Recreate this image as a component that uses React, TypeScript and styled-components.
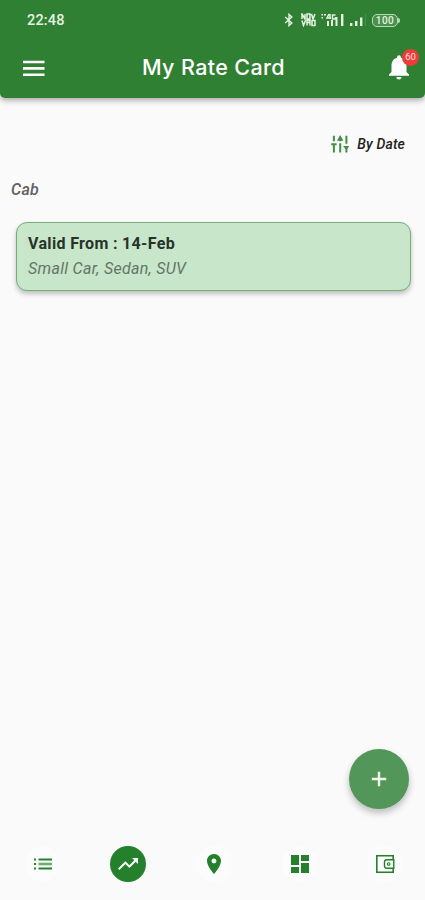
import React from 'react';
import styled, { createGlobalStyle } from 'styled-components';
import {
  MdDashboard,
  MdLocationOn,
  MdNotifications,
  MdTrendingUp,
} from 'react-icons/md';

const GlobalStyle = createGlobalStyle`
  * { box-sizing: border-box; }
  body { margin: 0; background: #fafafa; font-family: Roboto, sans-serif; }
  button { border: 0; padding: 0; background: none; font: inherit; color: inherit; }
  svg { display: block; flex: none; }
`;

const Screen = styled.div`
  position: relative;
  display: flex;
  flex-direction: column;
  width: 425px;
  height: 900px;
  overflow: hidden;
  background: #fafafa;
`;

const Header = styled.header`
  flex: none;
  height: 98px;
  background: #308034;
  color: #fff;
  border-radius: 0 0 5px 5px;
  box-shadow: 0 2px 6px rgba(0, 0, 0, 0.36);
`;

const StatusBar = styled.div`
  display: flex;
  align-items: center;
  justify-content: space-between;
  height: 38px;
  padding: 2px 25px 0 27px;
  color: #e6f3e3;
`;

const Clock = styled.span`
  font-size: 14.5px;
  font-weight: 500;
  letter-spacing: 0.15px;
`;

const StatusIcons = styled.div`
  display: flex;
  align-items: center;
`;

const NetworkSlot = styled.span`
  margin-left: 5px;
`;

const Toolbar = styled.div`
  display: grid;
  grid-template-columns: 60px 1fr 60px;
  align-items: center;
  height: 60px;
`;

const MenuButton = styled.button`
  padding-left: 23px;
`;

const Title = styled.h1`
  margin: 0;
  padding: 0 0 2px 2px;
  text-align: center;
  font: 500 21.5px/30px Inter, sans-serif;
  letter-spacing: 0.38px;
  white-space: nowrap;
`;

const BellButton = styled.button`
  position: relative;
  justify-self: end;
  margin-right: 11px;
  margin-bottom: 2px;
`;

const Badge = styled.span`
  position: absolute;
  top: -3px;
  right: -5px;
  width: 17px;
  height: 17px;
  border-radius: 50%;
  background: #ee3c3a;
  color: #ffe0dc;
  font-size: 9.5px;
  line-height: 16px;
  text-align: center;
`;

const Content = styled.main`
  flex: 1;
  padding: 33px 14px 0 11px;
`;

const SortRow = styled.div`
  display: flex;
  align-items: center;
  justify-content: flex-end;
  gap: 8px;
  height: 25px;
  padding-right: 6px;
  color: #222;
  font-size: 14px;
  font-weight: 500;
  font-style: italic;
  letter-spacing: 0.15px;
`;

const SectionLabel = styled.h2`
  margin: 24px 0 0;
  color: #616161;
  font-size: 16px;
  line-height: 20px;
  font-weight: 500;
  font-style: italic;
  letter-spacing: 0.3px;
`;

const RateCard = styled.article`
  height: 69px;
  margin: 22px 0 0 5px;
  padding: 11px;
  border: 1px solid #75ad7a;
  border-radius: 11px;
  background: #c8e6c9;
  box-shadow: 0 3px 5px rgba(0, 0, 0, 0.24);
`;

const CardTitle = styled.div`
  color: #263329;
  font-size: 16px;
  line-height: 20px;
  font-weight: 700;
  letter-spacing: 0.34px;
`;

const CardDetail = styled.div`
  margin-top: 5px;
  color: #647568;
  font-size: 16px;
  line-height: 20px;
  font-style: italic;
  letter-spacing: 0.3px;
`;

const AddButton = styled.button`
  position: absolute;
  right: 16px;
  bottom: 91px;
  display: grid;
  place-items: center;
  width: 60px;
  height: 60px;
  border-radius: 50%;
  background: #529659;
  color: #f2f8e9;
  box-shadow: 0 4px 7px rgba(0, 0, 0, 0.25);
`;

const BottomNav = styled.nav`
  display: grid;
  grid-template-columns: repeat(5, 1fr);
  flex: none;
  height: 72px;
  margin-right: -3px;
  padding-bottom: 1px;
  background: #fafafa;
`;

const NavItem = styled.button<{ $active?: boolean }>`
  display: grid;
  place-items: center;
  place-self: center;
  width: 36px;
  height: 36px;
  border-radius: 50%;
  background: ${({ $active }) => ($active ? '#24802a' : '#fcfcfc')};
  color: ${({ $active }) => ($active ? '#fff' : '#24802a')};
`;

const BluetoothIcon = () => (
  <svg width="14" height="14" viewBox="0 0 14 14" fill="none" stroke="currentColor" strokeWidth="1.4">
    <path d="M3.2 4l6.6 6L7 12.6V1.4L9.8 4 3.2 10" />
  </svg>
);

const MenuIcon = () => (
  <svg width="22" height="17" viewBox="0 0 22 17" fill="#fff">
    <path d="M0 .7h21.5v2.6H0zM0 7.1h21.5v2.6H0zM0 13.4h21.5V16H0z" />
  </svg>
);

const FilterIcon = () => (
  <svg width="18" height="18" viewBox="0 0 18 18" fill="#438d48">
    <path d="M1.9.8h2v5.5h-2zM8.2 2.5h2v3.8h-2zM14.4.8h2v8h-2zM9.2 0l3.2 5.8H6zM.2 8.2h5.4v2H3.9v7.2h-2v-7.2H.2zM8.2 8.2h2v9.2h-2zM12.1 11.1h6l-1.7 2.9v3.4h-2V14z" />
  </svg>
);

const NetworkIcon = () => (
  <svg width="66" height="14" viewBox="0 0 66 14" fill="currentColor">
    <g fill="none" stroke="currentColor" strokeWidth="1.5">
      <path d="M1 6V1l3 5V1M6 1v5h3V1zM10.5 1l1.5 5 2-5M1 7.5l1.5 5 2-5M6 12.5v-5h3v2H6M9 9.5v3M11 12.5v-5h3v5z" />
      <path d="M28 1l-2 4h4M29 1v5M34.5 2h-3v4h3V4" />
    </g>
    <path d="M20.5 1H22v1.5h-1.5zM23 1h2v1.5h-2zM20.5 4H22v1.5h-1.5zM26 8h2v5h-2zM30 7h2v6h-2zM34.5 4h2v9h-2zM40 1h2.4v12H40zM49 10h2.4v3H49zM54 8h2.4v5H54zM59 4.5h2.4V13H59z" />
    <path d="M64 1h1v12h-1z" opacity=".15" />
  </svg>
);

const ListIcon = () => (
  <svg width="24" height="24" viewBox="0 0 24 24" fill="currentColor">
    <path d="M3 6.6h2v2H3zM3 11h2v2H3zM3 15.4h2v2H3zM7.5 6.6H21v2H7.5zM7.5 15.4H21v2H7.5z" />
    <path d="M7.5 10.7H21v2.6H7.5z" opacity=".65" />
  </svg>
);

const WalletIcon = () => (
  <svg width="24" height="24" viewBox="0 0 24 24" fill="none" stroke="currentColor" strokeWidth="1.6">
    <path d="M20.2 7.5V3.8H3.8v16.4h16.4v-3.7" />
    <path d="M20.8 7.8h-7q-2.3 0-2.3 2.2v4q0 2.2 2.3 2.2h7z" strokeWidth="1.4" />
    <circle cx="15.7" cy="12" r="1.3" strokeWidth="1.1" />
  </svg>
);

const PlusIcon = () => (
  <svg width="24" height="24" viewBox="0 0 24 24" fill="currentColor">
    <path d="M10.8 4.8h2.4v6h6v2.4h-6v6h-2.4v-6h-6v-2.4h6z" />
  </svg>
);

const Battery = styled.span`
  display: flex;
  align-items: center;
  margin-left: 5px;

  &::after {
    content: '';
    width: 2px;
    height: 5px;
    background: #b9d8b8;
    border-radius: 0 2px 2px 0;
  }
`;

const BatteryLevel = styled.span`
  width: 26px;
  height: 13px;
  border: 1px solid #b9d8b8;
  border-radius: 5px;
  background: #4a914c;
  font-size: 10px;
  line-height: 11px;
  font-weight: 500;
  text-align: center;
  letter-spacing: 0.5px;
`;

const navigation = [
  { label: 'List', icon: <ListIcon /> },
  { label: 'Rates', icon: <MdTrendingUp size={24} />, active: true },
  { label: 'Location', icon: <MdLocationOn size={24} /> },
  { label: 'Dashboard', icon: <MdDashboard size={24} /> },
  { label: 'Wallet', icon: <WalletIcon /> },
];

export default function App() {
  return (
    <>
      <GlobalStyle />
      <Screen>
        <Header>
          <StatusBar>
            <Clock>22:48</Clock>
            <StatusIcons>
              <BluetoothIcon />
              <NetworkSlot><NetworkIcon /></NetworkSlot>
              <Battery><BatteryLevel>100</BatteryLevel></Battery>
            </StatusIcons>
          </StatusBar>
          <Toolbar>
            <MenuButton aria-label="Menu"><MenuIcon /></MenuButton>
            <Title>My Rate Card</Title>
            <BellButton aria-label="Notifications">
              <MdNotifications size={30} />
              <Badge>60</Badge>
            </BellButton>
          </Toolbar>
        </Header>
        <Content>
          <SortRow><FilterIcon />By Date</SortRow>
          <SectionLabel>Cab</SectionLabel>
          <RateCard>
            <CardTitle>Valid From : 14-Feb</CardTitle>
            <CardDetail>Small Car, Sedan, SUV</CardDetail>
          </RateCard>
        </Content>
        <BottomNav>
          {navigation.map(({ label, icon, active }) => (
            <NavItem key={label} aria-label={label} $active={active}>
              {icon}
            </NavItem>
          ))}
        </BottomNav>
        <AddButton aria-label="Add"><PlusIcon /></AddButton>
      </Screen>
    </>
  );
}
